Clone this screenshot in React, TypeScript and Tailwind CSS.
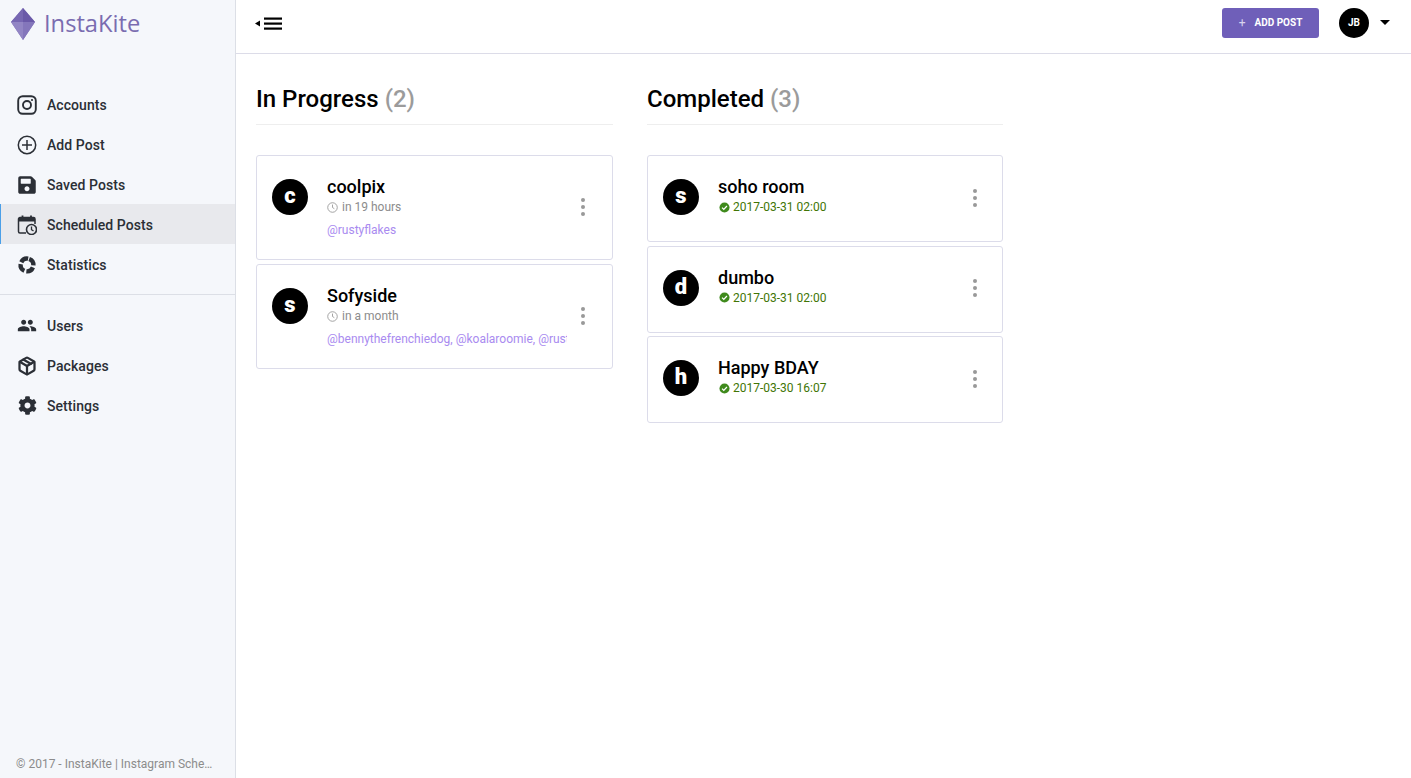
import React from "react";
import { Package } from "lucide-react";
import { FaCog, FaSave } from "react-icons/fa";

const Kite = () => (
  <svg width="26" height="33" viewBox="0 0 26 33" className="shrink-0">
    <polygon points="13,0 25,14 13,32 1,14" fill="#8273b9" />
    <polygon points="13,0 25,14 13,14" fill="#6a59a8" />
    <polygon points="13,0 1,14 13,14" fill="#7767b2" />
    <polygon points="1,14 13,14 13,32" fill="#9285c4" />
    <polygon points="25,14 13,14 13,32" fill="#8476bb" />
  </svg>
);

const iconClass = "w-5 h-5 text-[#2b2f36]";

const Insta = () => (
  <svg viewBox="0 0 20 20" className={iconClass} fill="none" stroke="currentColor">
    <rect x="1.2" y="1.2" width="17.6" height="17.6" rx="4.5" strokeWidth="1.9" />
    <circle cx="10" cy="10" r="4" strokeWidth="1.9" />
    <circle cx="15" cy="5" r="1.1" fill="currentColor" stroke="none" />
  </svg>
);
const AddCircle = () => (
  <svg viewBox="0 0 20 20" className={iconClass} fill="none" stroke="currentColor" strokeWidth="1.5">
    <circle cx="10" cy="10" r="8.7" />
    <path d="M10 5v10M5 10h10" />
  </svg>
);
const CalClock = () => (
  <svg viewBox="0 0 20 20" className="w-5 h-5 text-[#2b2f36]" fill="none" stroke="currentColor">
    <path d="M5.5 0.5v3M14 0.5v3" strokeWidth="1.8" />
    <path d="M9 18H3a1.5 1.5 0 0 1-1.5-1.5V4A1.5 1.5 0 0 1 3 2.5h13.5A1.5 1.5 0 0 1 18 4v5" strokeWidth="1.5" />
    <path d="M2 3h16v3.5H2Z" fill="currentColor" stroke="none" />
    <circle cx="14.5" cy="14.5" r="5" strokeWidth="1.6" fill="#e8e9ed" />
    <path d="M14.5 11.5v3.2l2 1.2" strokeWidth="1.3" />
  </svg>
);
const Stats = () => (
  <svg viewBox="0 0 20 20" className={iconClass} fill="none" stroke="currentColor" strokeWidth="4.4">
    <circle cx="10" cy="10" r="6.4" strokeDasharray="7.9 2.15" transform="rotate(-70 10 10)" />
  </svg>
);
const People = () => (
  <svg viewBox="0 0 24 24" className="w-[23px] h-[23px] text-[#2b2f36]" fill="currentColor">
    <path d="M16 11c1.66 0 2.99-1.34 2.99-3S17.66 5 16 5c-1.66 0-3 1.34-3 3s1.34 3 3 3zm-8 0c1.66 0 2.99-1.34 2.99-3S9.66 5 8 5C6.34 5 5 6.34 5 8s1.34 3 3 3zm0 2c-2.33 0-7 1.17-7 3.5V19h14v-2.5c0-2.33-4.67-3.5-7-3.5zm8 0c-.29 0-.62.02-.97.05 1.16.84 1.97 1.97 1.97 3.45V19h6v-2.5c0-2.33-4.67-3.5-7-3.5z" />
  </svg>
);
const Clock = () => (
  <svg viewBox="0 0 12 12" className="w-[11px] h-[11px] shrink-0 mr-px" fill="none" stroke="#9b9b9b" strokeWidth="1">
    <circle cx="6" cy="6" r="5.2" />
    <path d="M6 2.8V6l2 1.3" />
  </svg>
);
const Check = () => (
  <svg viewBox="0 0 12 12" className="w-[11px] h-[11px] shrink-0 ml-px">
    <circle cx="6" cy="6" r="5.5" fill="#3f8a1c" />
    <path d="M3.3 6.1 5.2 8l3.5-3.6" fill="none" stroke="#fff" strokeWidth="1.4" />
  </svg>
);

const Item = ({ icon, label, active }: { icon: React.ReactNode; label: string; active?: boolean }) => (
  <div className={`h-10 pt-px flex items-center gap-[10px] pl-[17px] text-sm font-medium tracking-[0.005em] text-[#2b2f36] relative ${active ? "bg-[#e8e9ed]" : ""}`}>
    {active && <span className="absolute left-0 top-0 bottom-0 w-px bg-[#4a9fe8]" />}
    <span className="w-5 h-5 flex items-center justify-center shrink-0">{icon}</span>
    <span>{label}</span>
  </div>
);

const Dots = () => (
  <div className="flex flex-col gap-[3px] w-1 shrink-0">
    <span className="w-1 h-1 rounded-full bg-[#999]" />
    <span className="w-1 h-1 rounded-full bg-[#999]" />
    <span className="w-1 h-1 rounded-full bg-[#999]" />
  </div>
);

const Card = ({ letter, name, sub, tags, done, h, pr }: { letter: string; name: string; sub: string; tags?: string; done?: boolean; h: string; pr: string }) => (
  <div className={`border border-[#dcdcea] rounded-[3px] bg-white pl-[15px] flex items-start ${h} ${pr}`}>
    <div className="mt-[23px] w-9 h-9 rounded-full bg-black text-white flex items-center justify-center text-[22px] leading-none font-black shrink-0 pb-[2px]">{letter}</div>
    <div className="ml-[19px] w-[240px] pt-[19px] min-w-0">
      <div className="text-lg leading-[24px] font-medium text-black">{name}</div>
      <div className={`flex items-center text-xs leading-[16px] ${done ? "gap-[3px] text-[#417505]" : "gap-[3px] text-[#8c8c8c]"}`}>
        {done ? <Check /> : <Clock />}
        <span>{sub}</span>
      </div>
      {tags && <div className="mt-[7px] text-xs leading-[16px] text-[#a98bf0] whitespace-nowrap overflow-hidden">{tags}</div>}
    </div>
    <div className="ml-auto self-center -mt-[2px]"><Dots /></div>
  </div>
);

const Column = ({ title, count, width, children }: { title: string; count: number; width: string; children: React.ReactNode }) => (
  <section className={width}>
    <h2 className="h-[71px] pt-[26px] border-b border-[#eeeeee] text-2xl leading-[38px] font-medium text-black">
      {title} <span className="text-[#9b9b9b]">({count})</span>
    </h2>
    <div className="mt-[30px] flex flex-col">{children}</div>
  </section>
);

export default function App() {
  return (
    <div className="flex h-[778px] w-full overflow-hidden bg-white font-['Roboto',sans-serif]">
      <aside className="w-[236px] shrink-0 bg-[#f5f7fb] border-r border-[#dcdfe6] flex flex-col">
        <div className="h-[84px] shrink-0 flex items-start gap-[8px] pl-[10px] pt-[8px]">
          <Kite />
          <span className="text-[23.7px] leading-[30px] text-[#7a6cb0] font-['Open_Sans',sans-serif]">InstaKite</span>
        </div>
        <nav className="flex flex-col">
          <Item icon={<Insta />} label="Accounts" />
          <Item icon={<AddCircle />} label="Add Post" />
          <Item icon={<FaSave size={20} color="#2b2f36" />} label="Saved Posts" />
          <Item icon={<CalClock />} label="Scheduled Posts" active />
          <Item icon={<Stats />} label="Statistics" />
        </nav>
        <div className="mt-[10px] border-t border-[#dcdfe6]" />
        <nav className="mt-[10px] flex flex-col">
          <Item icon={<People />} label="Users" />
          <Item icon={<Package size={20} strokeWidth={2.7} color="#2b2f36" />} label="Packages" />
          <Item icon={<FaCog size={19} color="#2b2f36" />} label="Settings" />
        </nav>
        <div className="mt-auto pl-4 pb-[6px] pr-[22px] text-xs leading-[16px] text-[#8c8c8c] truncate">© 2017 - InstaKite | Instagram Scheduler</div>
      </aside>
      <div className="flex-1 min-w-0 flex flex-col">
        <header className="h-[54px] shrink-0 border-b border-[#dcdce8] flex items-center pb-[8px] pl-[19px] pr-[21px]">
          <svg width="28" height="14" viewBox="0 0 28 14" className="shrink-0">
            <polygon points="0,7.6 5,4.6 5,10.6" fill="#000" />
            <rect x="9" y="1.5" width="18" height="2.2" fill="#000" />
            <rect x="9" y="6.5" width="18" height="2.2" fill="#000" />
            <rect x="9" y="11.5" width="18" height="2.2" fill="#000" />
          </svg>
          <button className="ml-auto w-[97px] h-[30px] rounded-[3px] bg-[#6f5fb9] text-white text-[10px] font-bold flex items-center justify-center gap-[9px]">
            <span className="text-xs font-normal leading-none text-[#d8d3ee]">+</span>
            <span>ADD POST</span>
          </button>
          <div className="ml-5 w-[30px] h-[30px] rounded-full bg-black text-white text-[10px] font-bold flex items-center justify-center">JB</div>
          <span className="ml-[11px] w-0 h-0 border-x-[5px] border-x-transparent border-t-[5px] border-t-black" />
        </header>
        <main className="flex-1 pl-5 flex gap-[34px] items-start">
          <Column title="In Progress" count={2} width="w-[357px]">
            <div className="flex flex-col gap-1">
              <Card pr="pr-[27px]" h="h-[105px]" letter="c" name="coolpix" sub="in 19 hours" tags="@rustyflakes" />
              <Card pr="pr-[27px]" h="h-[105px]" letter="s" name="Sofyside" sub="in a month" tags="@bennythefrenchiedog, @koalaroomie, @rustyflakes" />
            </div>
          </Column>
          <Column title="Completed" count={3} width="w-[356px]">
            <div className="flex flex-col gap-[3.5px]">
              <Card pr="pr-[25px]" h="h-[87px]" letter="s" name="soho room" sub="2017-03-31 02:00" done />
              <Card pr="pr-[25px]" h="h-[87px]" letter="d" name="dumbo" sub="2017-03-31 02:00" done />
              <Card pr="pr-[25px]" h="h-[87px]" letter="h" name="Happy BDAY" sub="2017-03-30 16:07" done />
            </div>
          </Column>
        </main>
      </div>
    </div>
  );
}
